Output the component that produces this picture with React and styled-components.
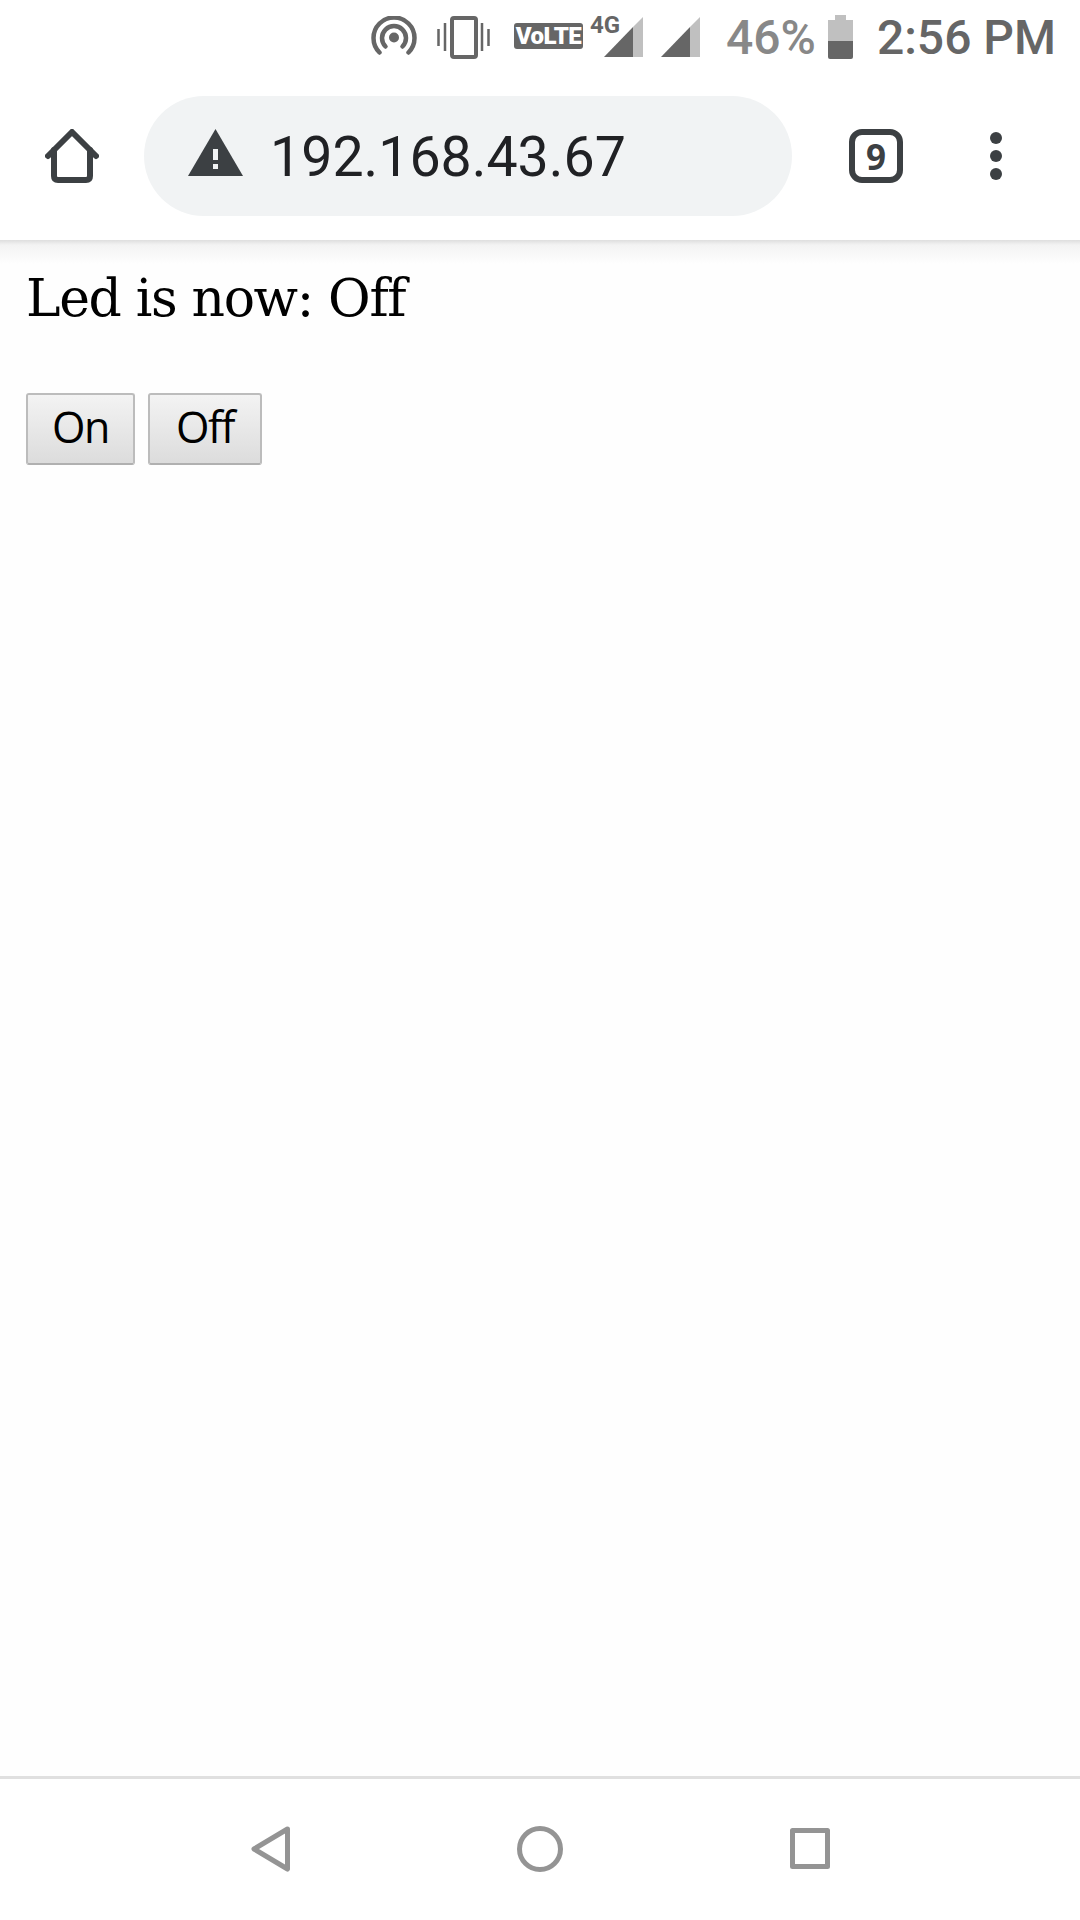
import React from "react";
import styled, { createGlobalStyle } from "styled-components";

const GlobalStyle = createGlobalStyle`
    html, body {
        margin: 0;
        padding: 0;
        background: #fff;
    }
`;

const Screen = styled.div`
    width: 1080px;
    height: 1920px;
    display: flex;
    flex-direction: column;
    overflow: hidden;
    background: #fefefe;
`;

const StatusBar = styled.div`
    height: 80px;
    flex: none;
    box-sizing: border-box;
    display: flex;
    align-items: center;
    padding: 0 0 6px 371px;
    background: #fff;
    font-family: Roboto, sans-serif;
`;

const StatusIcon = styled.svg`
    display: block;
    flex: none;
    margin-left: ${(props) => props.$gap || 0}px;
`;

const WarningIcon = styled(StatusIcon)`
    margin-bottom: 7px;
`;

const VolteBadge = styled.div`
    width: 69px;
    height: 26px;
    margin-left: 24px;
    margin-top: -2px;
    border-radius: 3px;
    background: #666;
    color: #fff;
    font-size: 24px;
    font-weight: 900;
    line-height: 26px;
    text-align: center;
    letter-spacing: -0.5px;
`;

const SignalSlot = styled.div`
    position: relative;
    margin-left: 21px;
`;

const NetworkLabel = styled.span`
    position: absolute;
    left: -14px;
    top: -3px;
    color: #666;
    font-family: "Liberation Sans Narrow", Roboto, sans-serif;
    font-size: 24px;
    font-weight: 700;
    line-height: 22px;
`;

const Percent = styled.span`
    margin-left: 26px;
    color: #888;
    font-size: 48px;
    font-weight: 500;
`;

const Clock = styled.span`
    margin-left: 24px;
    color: #666;
    font-size: 48px;
    font-weight: 500;
    white-space: nowrap;
`;

const Toolbar = styled.div`
    position: relative;
    height: 160px;
    flex: none;
    box-sizing: border-box;
    display: flex;
    align-items: center;
    padding: 0 0 8px 45px;
    background: #fff;

    &::after {
        content: "";
        position: absolute;
        left: 0;
        right: 0;
        top: 100%;
        height: 24px;
        background: linear-gradient(#dedede 0, #f3f3f3 5px, #fefefe 100%);
    }
`;

const AddressPill = styled.div`
    width: 648px;
    height: 120px;
    margin-left: 45px;
    padding-left: 44px;
    box-sizing: border-box;
    display: flex;
    align-items: center;
    gap: 27px;
    border-radius: 60px;
    background: #f1f3f4;
`;

const AddressText = styled.span`
    margin-top: 4px;
    color: #202124;
    font-family: Roboto, sans-serif;
    font-size: 55.5px;
    line-height: 60px;
`;

const TabCount = styled.div`
    width: 54px;
    height: 54px;
    margin-left: 57px;
    box-sizing: border-box;
    display: flex;
    align-items: center;
    justify-content: center;
    border: 6px solid #3c4043;
    border-radius: 13px;
    color: #3c4043;
    font-family: "Liberation Sans Narrow", "Open Sans", sans-serif;
    font-size: 35px;
    font-weight: 700;
`;

const MenuDots = styled.div`
    margin-left: 87px;
    display: flex;
    flex-direction: column;
    gap: 6px;
`;

const MenuDot = styled.span`
    width: 12px;
    height: 12px;
    border-radius: 50%;
    background: #3c4043;
`;

const Page = styled.main`
    flex: 1;
    padding: 26px 26px 0;
`;

const LedStatus = styled.p`
    margin: 0;
    color: #000;
    font-family: "DejaVu Serif", serif;
    font-size: 52px;
    line-height: 64px;
    letter-spacing: -1.35px;
`;

const ButtonRow = styled.div`
    margin-top: 63px;
    display: flex;
    gap: 13px;
`;

const LedButton = styled.button`
    width: ${(props) => props.$width}px;
    height: 72px;
    padding: 0 0 6px;
    border: 2px solid #bcbcbc;
    border-bottom-color: #b0b0b0;
    border-radius: 3px;
    background: linear-gradient(#f3f3f3, #dcdcdc);
    color: #000;
    font-family: "Open Sans", sans-serif;
    font-size: 43px;
    letter-spacing: -1.5px;
`;

const NavBar = styled.nav`
    height: 144px;
    flex: none;
    box-sizing: border-box;
    display: flex;
    align-items: center;
    padding: 0 0 2px 251px;
    border-top: 3px solid #e0e0e0;
    background: #fff;
`;

const NavIcon = styled.svg`
    display: block;
    flex: none;
    margin-left: ${(props) => props.$gap || 0}px;
`;

const App = () => (
    <Screen>
        <GlobalStyle />
        <StatusBar>
            <StatusIcon width="46" height="42" viewBox="0 0 46 42" fill="none" stroke="#666" strokeWidth="4.5" strokeLinecap="round">
                <path d="M8.5 36.5A20.5 20.5 0 1 1 37.5 36.5" />
                <path d="M14.5 30.5A12 12 0 1 1 31.5 30.5" />
                <circle cx="23" cy="21.5" r="5" fill="#666" stroke="none" />
            </StatusIcon>
            <StatusIcon $gap={20} width="53" height="43" viewBox="0 0 53 43" fill="none" stroke="#666">
                <rect x="15" y="2" width="24" height="39" rx="2" strokeWidth="4" />
                <path d="M1.5 13V30M8 7V35M45 7V35M51.5 13V30" strokeWidth="2.5" />
            </StatusIcon>
            <VolteBadge>VoLTE</VolteBadge>
            <SignalSlot>
                <NetworkLabel>4G</NetworkLabel>
                <StatusIcon width="39" height="40" viewBox="0 0 39 40">
                    <polygon points="29,10 39,0 39,40 29,40" fill="#c0c0c0" />
                    <polygon points="0,40 29,10 29,40" fill="#666" />
                </StatusIcon>
            </SignalSlot>
            <StatusIcon $gap={18} width="39" height="40" viewBox="0 0 39 40">
                <polygon points="29,10 39,0 39,40 29,40" fill="#c0c0c0" />
                <polygon points="0,40 29,10 29,40" fill="#666" />
            </StatusIcon>
            <Percent>46%</Percent>
            <StatusIcon $gap={12} width="25" height="44" viewBox="0 0 25 44">
                <path d="M7 0H18V5H25V26H0V5H7Z" fill="#c0c0c0" />
                <path d="M0 26H25V42Q25 44 23 44H2Q0 44 0 42Z" fill="#666" />
            </StatusIcon>
            <Clock>2:56 PM</Clock>
        </StatusBar>
        <Toolbar>
            <StatusIcon width="54" height="54" viewBox="0 0 54 54" fill="none" stroke="#3c4043" strokeWidth="6" strokeLinecap="round" strokeLinejoin="round">
                <path d="M3 27L27 3L51 27" />
                <path d="M9 21V47Q9 51 13 51H41Q45 51 45 47V21" />
            </StatusIcon>
            <AddressPill>
                <WarningIcon width="55" height="47" viewBox="0 0 55 47">
                    <polygon points="27.5,0 55,47 0,47" fill="#3c4043" />
                    <rect x="25" y="20" width="5" height="11" fill="#f1f3f4" />
                    <rect x="25" y="35" width="5" height="5" fill="#f1f3f4" />
                </WarningIcon>
                <AddressText>192.168.43.67</AddressText>
            </AddressPill>
            <TabCount>9</TabCount>
            <MenuDots>
                <MenuDot />
                <MenuDot />
                <MenuDot />
            </MenuDots>
        </Toolbar>
        <Page>
            <LedStatus>Led is now: Off</LedStatus>
            <ButtonRow>
                <LedButton $width={109}>On</LedButton>
                <LedButton $width={114}>Off</LedButton>
            </ButtonRow>
        </Page>
        <NavBar>
            <NavIcon width="39" height="46" viewBox="0 0 39 46" fill="none" stroke="#949494" strokeWidth="5" strokeLinejoin="round">
                <polygon points="36.5,3 3,23 36.5,43" />
            </NavIcon>
            <NavIcon $gap={227} width="46" height="46" viewBox="0 0 46 46" fill="none" stroke="#949494" strokeWidth="5">
                <circle cx="23" cy="23" r="20.5" />
            </NavIcon>
            <NavIcon $gap={227} width="40" height="41" viewBox="0 0 40 41" fill="none" stroke="#949494" strokeWidth="5" strokeLinejoin="round">
                <rect x="2.5" y="2.5" width="35" height="36" />
            </NavIcon>
        </NavBar>
    </Screen>
);

export default App;
